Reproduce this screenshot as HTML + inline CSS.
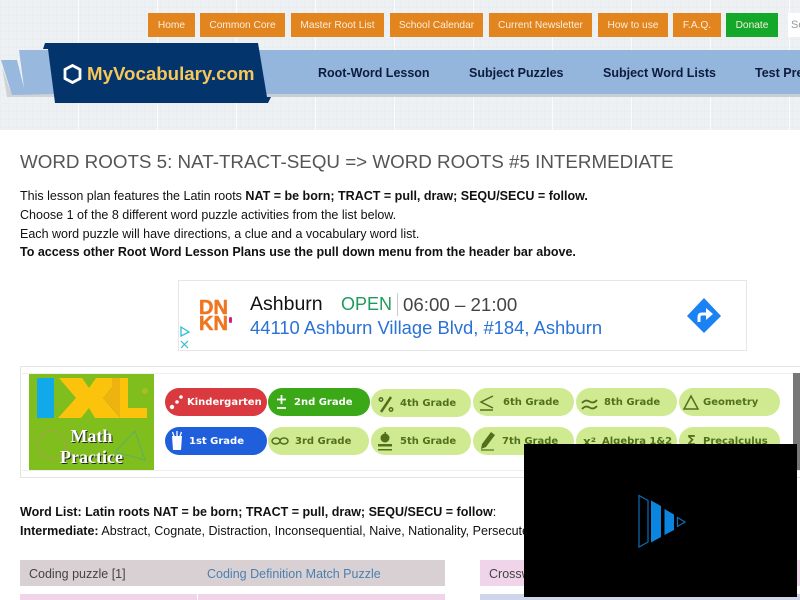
<!DOCTYPE html>
<html><head><meta charset="utf-8">
<style>
html,body{margin:0;padding:0;background:#fff;width:800px;height:600px;overflow:hidden}
body{font-family:"Liberation Sans",sans-serif;position:relative}
.a{position:absolute;white-space:nowrap}
#hd{position:absolute;left:0;top:0;width:800px;height:130px;background-color:#eef1f3;
background-image:linear-gradient(90deg,rgba(255,255,255,.75) 0,rgba(255,255,255,.75) 1px,transparent 1px),linear-gradient(90deg,#ebeef1 0,#ebeef1 1px,transparent 1px),linear-gradient(0deg,#ebeef1 0,#ebeef1 1px,transparent 1px);
background-size:79px 100%,8px 8px,8px 8px;background-position:-1px 0,0 0,0 0}
.b{position:absolute;top:13px;height:24px;line-height:25px;background:#e2851f;color:#fbeedd;font-size:10.2px;text-align:center;white-space:nowrap}
.n{position:absolute;top:66px;font-size:12.5px;font-weight:bold;color:#0d1c3c;white-space:nowrap}
.p{position:absolute;height:28px;border-radius:14px;background:#d0ea92;color:#52701c;font:bold 10px/30px "DejaVu Sans",sans-serif;white-space:nowrap;letter-spacing:0}
.p span{position:absolute;top:0}
.t{font-size:12.53px;color:#111;left:20px;line-height:18px}
.r{position:absolute;font-size:12.5px;line-height:26px;color:#444;white-space:nowrap}
</style></head><body>
<div id="hd"></div>
<div class="b" style="left:148px;width:47px">Home</div>
<div class="b" style="left:200px;width:85px">Common Core</div>
<div class="b" style="left:291px;width:93px">Master Root List</div>
<div class="b" style="left:390px;width:93px">School Calendar</div>
<div class="b" style="left:489px;width:103px">Current Newsletter</div>
<div class="b" style="left:598px;width:70px">How to use</div>
<div class="b" style="left:673px;width:48px">F.A.Q.</div>
<div class="b" style="left:726px;width:52px;background:#13a82a">Donate</div>
<div class="a" style="left:788px;top:13px;width:12px;height:24px;background:#fff;color:#999;font-size:11px;line-height:25px;padding-left:3px;box-sizing:border-box;overflow:hidden">Search</div>
<svg class="a" style="left:0;top:40px" width="800" height="70" viewBox="0 0 800 70">
<polygon points="2,27 7,57 56,57 56,50 10,50" fill="#cfd3d6"/>
<rect x="260" y="54" width="540" height="3" fill="#c6ced6"/>
<polygon points="1,20 17,20 24,48 19,10 50,10 55,54 12,55" fill="#98b8de"/>
<rect x="255" y="10" width="545" height="44" fill="#94b5dc"/>
<polygon points="45,3 258,3 267,57 271,57 268,63 55,63 48,9 43,9" fill="#03346b"/>
</svg>
<svg class="a" style="left:62px;top:63px" width="21" height="22" viewBox="0 0 21 22"><polygon points="10.500,2.500 18,6.500 18,15.500 10.500,19.500 3,15.500 3,6.500" fill="none" stroke="#fff" stroke-width="2.800"/></svg>
<div class="a" style="left:87px;top:64px;font-size:18.7px;font-weight:bold;color:#f9c65a;line-height:20px">MyVocabulary.com</div>
<div class="n" style="left:318px">Root-Word Lesson</div>
<div class="n" style="left:469px">Subject Puzzles</div>
<div class="n" style="left:603px">Subject Word Lists</div>
<div class="n" style="left:755px">Test Prep</div>

<div class="a" style="left:20px;top:151px;font-size:18.8px;line-height:22px;color:#555">WORD ROOTS 5: NAT-TRACT-SEQU =&gt; WORD ROOTS #5 INTERMEDIATE</div>
<div class="a t" style="top:187px">This lesson plan features the Latin roots <b>NAT = be born; TRACT = pull, draw; SEQU/SECU = follow.</b></div>
<div class="a t" style="top:206px">Choose 1 of the 8 different word puzzle activities from the list below.</div>
<div class="a t" style="top:225px">Each word puzzle will have directions, a clue and a vocabulary word list.</div>
<div class="a t" style="top:243px"><b>To access other Root Word Lesson Plans use the pull down menu from the header bar above.</b></div>

<!-- location ad -->
<div class="a" style="left:178px;top:280px;width:569px;height:71px;border:1px solid #e6e6e6;box-sizing:border-box"></div>
<div class="a" style="left:199px;top:300px;font:bold 20px/16px 'Liberation Sans',sans-serif;color:#f0751f;-webkit-text-stroke:.5px #f0751f">DN</div>
<div class="a" style="left:199px;top:316px;font:bold 20px/16px 'Liberation Sans',sans-serif;color:#f0751f;-webkit-text-stroke:.5px #f0751f">KN</div>
<div class="a" style="left:229px;top:317px;width:3px;height:6px;border-radius:2px;background:#e0177f"></div>
<div class="a" style="left:250px;top:293px;font-size:19.5px;line-height:23px;color:#111">Ashburn</div>
<div class="a" style="left:341px;top:293px;font-size:18px;line-height:23px;color:#1e9a5e">OPEN</div>
<div class="a" style="left:397px;top:293px;width:1px;height:23px;background:#ccc"></div>
<div class="a" style="left:403px;top:293px;font-size:18.7px;line-height:23px;color:#444">06:00 – 21:00</div>
<div class="a" style="left:250px;top:316px;font-size:18.4px;line-height:24px;color:#2a72d6">44110 Ashburn Village Blvd, #184, Ashburn</div>
<svg class="a" style="left:686px;top:297px" width="36" height="38" viewBox="0 0 36 38"><polygon points="18,1 35,19 18,36 1,19" fill="#1a82f2"/><path d="M13 25v-5q0-3 3-3h6" fill="none" stroke="#fff" stroke-width="3"/><polygon points="20,11 27,17 20,23" fill="#fff"/></svg>
<svg class="a" style="left:178px;top:325px" width="14" height="26" viewBox="0 0 14 26"><polygon points="3,2 11,7 3,11" fill="none" stroke="#2ebbd8" stroke-width="1.300"/><path d="M3 16l7 7M10 16l-7 7" stroke="#2ebbd8" stroke-width="1.200"/></svg>

<!-- IXL ad -->
<div class="a" style="left:20px;top:366px;width:780px;height:112px;border:1px solid #e4e4e4;border-right:0;box-sizing:border-box"></div>
<div class="a" style="left:22px;top:373px;width:778px;height:98px;border-top:1px solid #eee;border-bottom:1px solid #eee;box-sizing:border-box"></div>
<div class="a" style="left:793px;top:373px;width:7px;height:97px;background:#777"></div>
<svg class="a" style="left:29px;top:374px" width="125" height="96" viewBox="0 0 125 96">
<rect width="125" height="96" fill="#7fbe1c"/>
<rect x="8" y="4" width="17" height="40" fill="#12a9ea"/>
<polygon points="30,4 53,4 60,14 67,4 91,4 74,24 91,44 66,44 60,34 52,44 29,44 47,24" fill="#fcc30d"/>
<polygon points="83,4 99,4 99,34 118,34 118,44 91,44 83,32" fill="#fcc30d"/>
<polygon points="83,4 91,4 91,44 83,34 74,24 83,14" fill="#eeb30f"/>
<circle cx="116" cy="17" r="3" fill="#a5c020"/>
<circle cx="22.700" cy="71" r="14" fill="none" stroke="#a8a050" stroke-width="1"/>
<polygon points="106,57 116,86 86,78" fill="none" stroke="#5fae6a" stroke-width="1"/>
</svg>
<div class="a" style="left:29px;top:426px;width:125px;text-align:center;color:#fff;font:bold 18px/21px 'Liberation Serif',serif;text-shadow:1px 1px 0 #222">Math<br>Practice</div>

<div class="p" style="left:165px;top:388px;width:102px;background:#d9393f;color:#fff"><span style="left:22px">Kindergarten</span></div>
<div class="p" style="left:268px;top:388px;width:102px;background:#3aa817;color:#fff"><span style="left:26px">2nd Grade</span></div>
<div class="p" style="left:371px;top:389px;width:100px"><span style="left:29px">4th Grade</span></div>
<div class="p" style="left:473px;top:388px;width:101px"><span style="left:30px">6th Grade</span></div>
<div class="p" style="left:576px;top:388px;width:101px"><span style="left:28px">8th Grade</span></div>
<div class="p" style="left:679px;top:388px;width:101px"><span style="left:24px">Geometry</span></div>

<div class="p" style="left:165px;top:427px;width:102px;background:#1f5fdc;color:#fff"><span style="left:24px">1st Grade</span></div>
<div class="p" style="left:268px;top:427px;width:101px"><span style="left:27px">3rd Grade</span></div>
<div class="p" style="left:371px;top:427px;width:100px"><span style="left:29px">5th Grade</span></div>
<div class="p" style="left:473px;top:427px;width:101px"><span style="left:29px">7th Grade</span></div>
<div class="p" style="left:576px;top:427px;width:101px"><span style="left:7px;font-size:12px">x²</span><span style="left:26px">Algebra 1&amp;2</span></div>
<div class="p" style="left:679px;top:427px;width:101px"><span style="left:8px;font-size:13px">Σ</span><span style="left:24px">Precalculus</span></div>

<svg class="a" style="left:0;top:0" width="800" height="470" viewBox="0 0 800 470">
<g fill="#fff"><circle cx="172" cy="407" r="2.200"/><circle cx="177" cy="402" r="1.800"/><circle cx="181" cy="397" r="1.800"/></g>
<path d="M281.500 395v9M277 399.500h9M277 408h9" stroke="#fff" stroke-width="1.800" fill="none"/>
<path d="M172 436h10l-1 14h-8z" fill="#fff"/><path d="M174 436l-1.500-4M177 436v-5M180 436l1.500-4" stroke="#fff" stroke-width="1.300"/>
<g fill="none" stroke="#52701c">
<path d="M391 397L381 412" stroke-width="2.500"/><circle cx="381" cy="399.500" r="1.700" stroke-width="1.500"/><circle cx="391" cy="409.500" r="1.700" stroke-width="1.500"/>
<path d="M493 396L481 402L493 408M480 410h13" stroke-width="1.500"/>
<path d="M582 403q3.500-4 7.500-1.500t7.500-1.500M582 409q3.500-4 7.500-1.500t7.500-1.500" stroke-width="1.800"/>
<path d="M691 396L698 409H684Z" stroke-width="1.500"/>
<ellipse cx="276" cy="441" rx="4" ry="3" stroke-width="1.500"/><ellipse cx="284" cy="441" rx="4" ry="3" stroke-width="1.500"/>
<path d="M481 450h13" stroke-width="1.200"/>
</g>
<g fill="#52701c">
<circle cx="385" cy="438" r="4.500"/><rect x="384.500" y="432" width="1.500" height="3"/><rect x="378" y="444" width="14" height="2.500"/><rect x="378" y="449" width="14" height="1.500"/>
<polygon points="491,432 495,435 486,447 481,449 482,444"/>
</g>
</svg>

<div class="a t" style="top:503px"><b>Word List: Latin roots NAT = be born; TRACT = pull, draw; SEQU/SECU = follow</b>:</div>
<div class="a t" style="top:522px"><b>Intermediate:</b> Abstract, Cognate, Distraction, Inconsequential, Naive, Nationality, Persecute, Sequel</div>

<div class="a" style="left:20px;top:560px;width:425px;height:26px;background:#d9d0d3"></div>
<div class="r" style="left:29px;top:561px">Coding puzzle [1]</div>
<div class="r" style="left:207px;top:561px;color:#4a80b0">Coding Definition Match Puzzle</div>
<div class="a" style="left:20px;top:594px;width:425px;height:6px;background:#f0d5ea"></div>
<div class="a" style="left:197px;top:594px;width:1px;height:6px;background:#fff"></div>
<div class="a" style="left:480px;top:560px;width:320px;height:26px;background:#f0d5ea"></div>
<div class="r" style="left:489px;top:561px">Crossword</div>
<div class="a" style="left:480px;top:594px;width:320px;height:6px;background:#cfd6ea"></div>

<!-- video overlay -->
<div class="a" style="left:524px;top:444px;width:273px;height:153px;background:#000"></div>
<svg class="a" style="left:630px;top:490px" width="60" height="64" viewBox="0 0 60 64">
<polygon points="9,5.500 18,10.500 18,52 9,57" fill="none" stroke="#0f6cb5" stroke-width="1.200"/>
<polygon points="21,10.500 31,16 31,47 21,52.500" fill="#0a86e0"/>
<polygon points="34.500,19 44,24.500 44,40 34.500,45" fill="#0a86e0"/>
<polygon points="47.500,27.500 55,32 47.500,36.500" fill="none" stroke="#0f6cb5" stroke-width="1.200"/>
</svg>
</body></html>
